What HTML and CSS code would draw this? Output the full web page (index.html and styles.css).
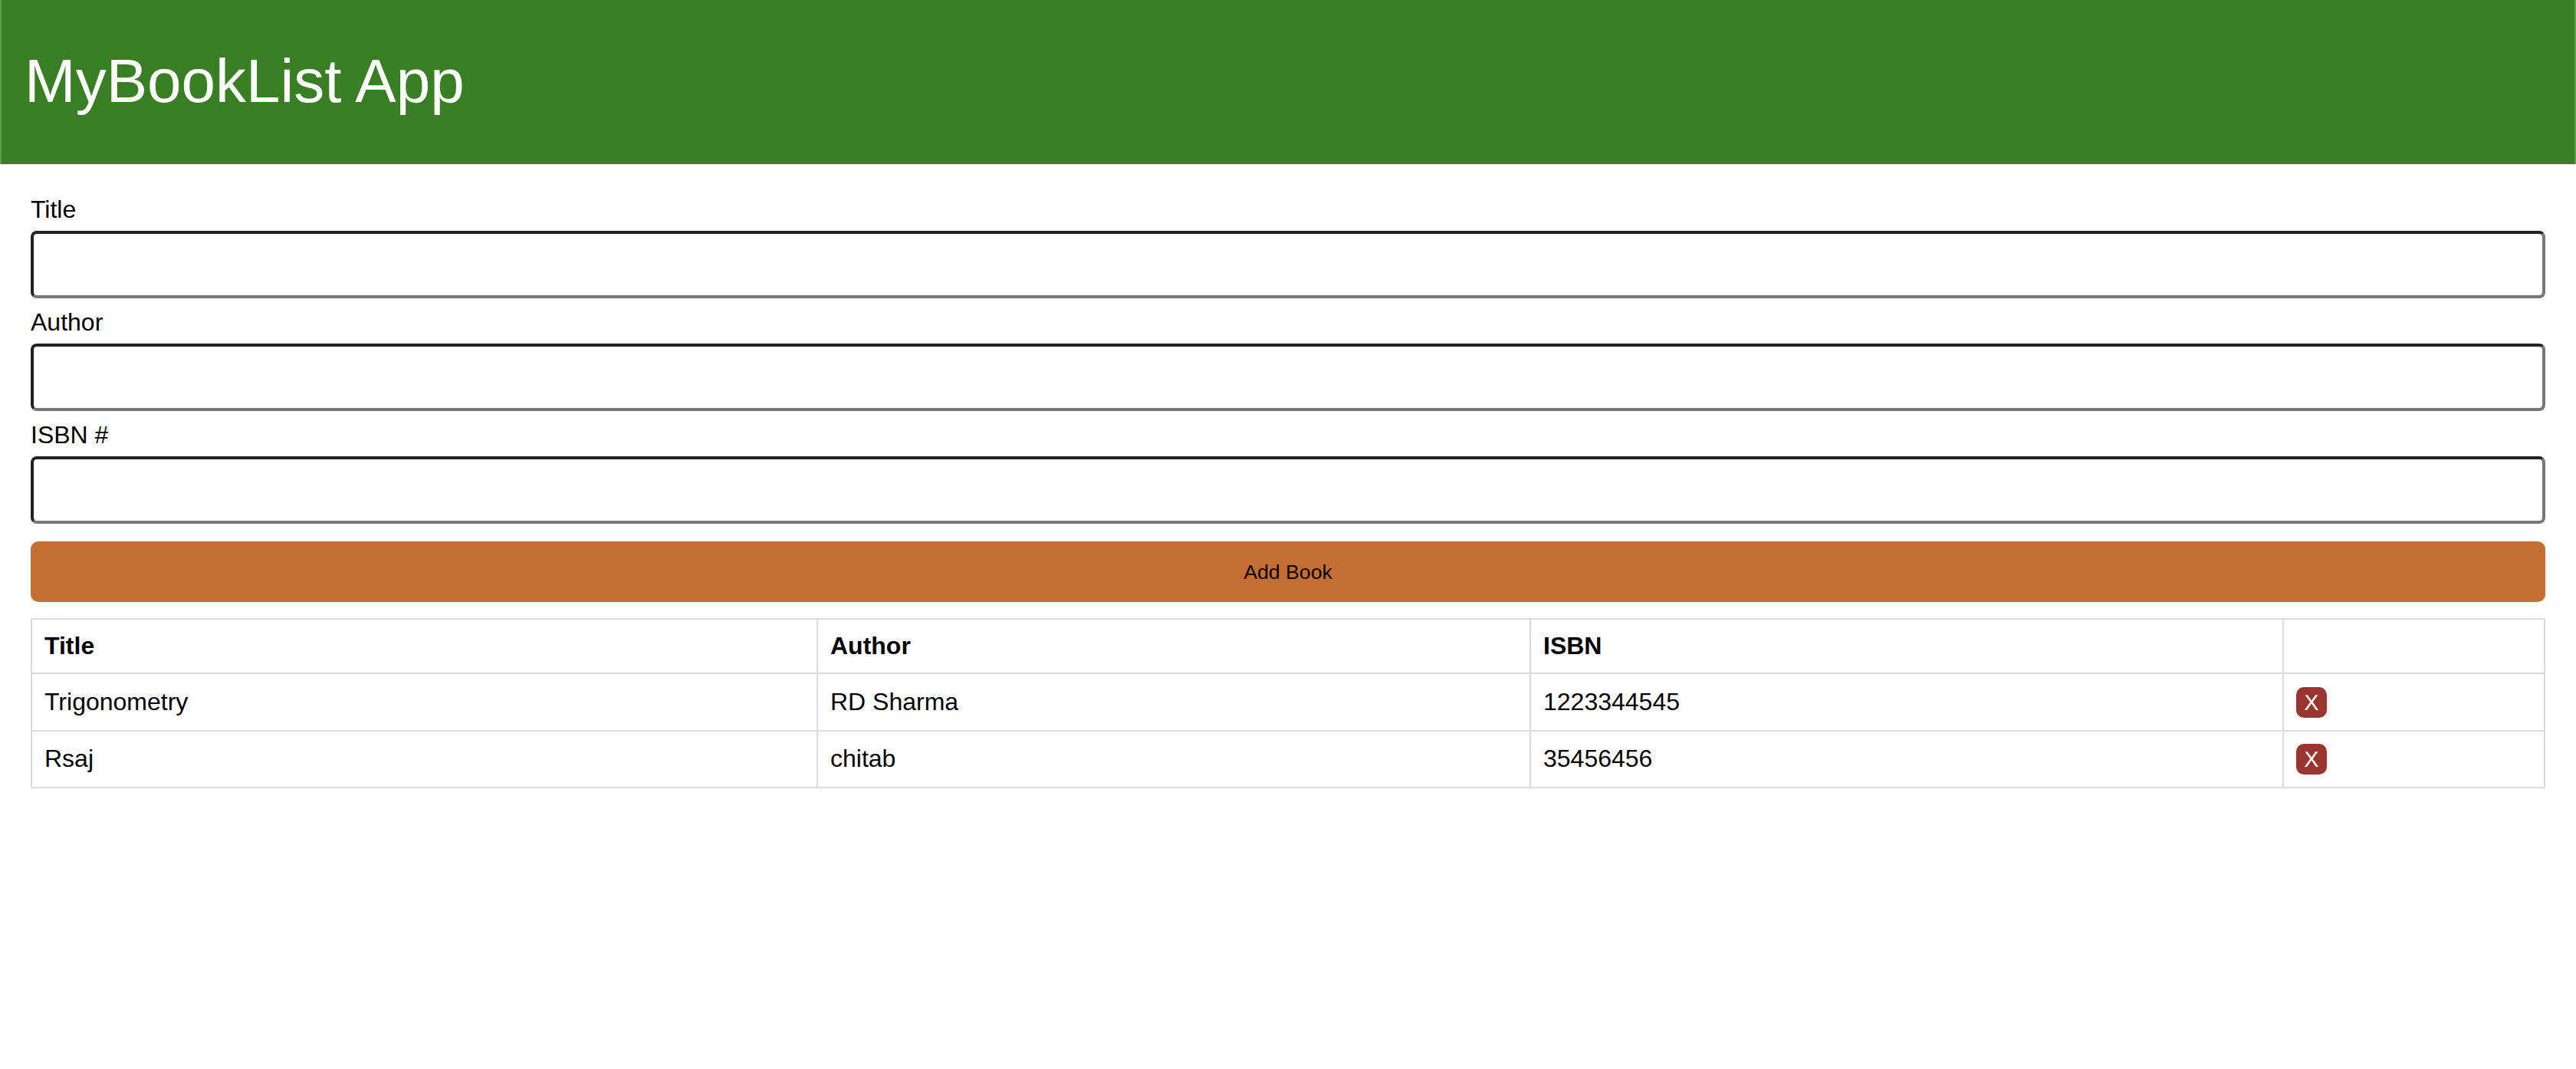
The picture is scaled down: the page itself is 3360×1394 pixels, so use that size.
FILE: index.html
```html
<!DOCTYPE html>
<html lang="en">
<head>
<meta charset="utf-8">
<title>MyBookList App</title>
<link rel="stylesheet" href="styles.css">
</head>
<body>
<header class="app-header">
  <h1 class="app-title">MyBookList App</h1>
</header>
<main class="container">
  <form class="book-form">
    <div class="form-group">
      <label class="form-label" for="title">Title</label>
      <input class="form-input" type="text" id="title">
    </div>
    <div class="form-group">
      <label class="form-label" for="author">Author</label>
      <input class="form-input" type="text" id="author">
    </div>
    <div class="form-group">
      <label class="form-label" for="isbn">ISBN #</label>
      <input class="form-input" type="text" id="isbn">
    </div>
    <button type="button" class="add-btn">Add Book</button>
  </form>
  <table class="book-table">
    <colgroup>
      <col class="col-title">
      <col class="col-author">
      <col class="col-isbn">
      <col class="col-action">
    </colgroup>
    <thead>
      <tr><th>Title</th><th>Author</th><th>ISBN</th><th></th></tr>
    </thead>
    <tbody>
      <tr><td>Trigonometry</td><td>RD Sharma</td><td>1223344545</td><td><button type="button" class="del-btn">X</button></td></tr>
      <tr><td>Rsaj</td><td>chitab</td><td>35456456</td><td><button type="button" class="del-btn">X</button></td></tr>
    </tbody>
  </table>
</main>
</body>
</html>
```
FILE: styles.css
```css
html, body {
  margin: 0;
  padding: 0;
  background: #ffffff;
}
body {
  font-family: "Liberation Sans", Arial, Helvetica, sans-serif;
  color: #000;
}
.app-header {
  box-sizing: border-box;
  height: 214px;
  background: #387e23;
  border-left: 2px solid #5e9a4d;
  border-right: 2px solid #5e9a4d;
  padding: 60px 30px 0;
}
.app-title {
  margin: 0;
  font-size: 80px;
  font-weight: normal;
  line-height: normal;
  color: #ffffff;
}
.container {
  padding: 41px 40px 0;
}
.book-form {
  display: flex;
  flex-direction: column;
}
.form-group {
  display: flex;
  flex-direction: column;
  margin-bottom: 13px;
}
.form-label {
  display: block;
  font-size: 32px;
  line-height: 36px;
}
.form-input {
  box-sizing: border-box;
  margin: 10px 0 0;
  height: 88px;
  width: 100%;
  border-style: solid;
  border-width: 4px;
  border-top-color: #222;
  border-left-color: #222;
  border-bottom-color: #777;
  border-right-color: #777;
  border-radius: 8px;
  background: #fff;
  font-size: 32px;
  font-family: inherit;
  padding: 0 12px;
}
.add-btn {
  margin-top: 10px;
  box-sizing: border-box;
  height: 79px;
  width: 100%;
  border: none;
  border-radius: 10px;
  background: #c46e33;
  color: #000;
  font-family: "Liberation Sans", Arial, sans-serif;
  font-size: 26.67px;
  line-height: 30px;
  padding: 25px 0 24px;
}
.book-table {
  margin-top: 21px;
  width: 100%;
  border-collapse: collapse;
  table-layout: fixed;
  font-size: 32px;
}
.col-title { width: 1025px; }
.col-author { width: 930px; }
.col-isbn { width: 982px; }
.col-action { width: auto; }
.book-table th,
.book-table td {
  border: 2px solid #dcdcdc;
  padding: 16px;
  text-align: left;
  vertical-align: middle;
}
.book-table th {
  font-weight: bold;
}
.del-btn {
  box-sizing: border-box;
  width: 40px;
  height: 40px;
  padding: 0;
  border: none;
  border-radius: 10px;
  background: #9a3430;
  color: #fff;
  font-family: "Liberation Sans", Arial, sans-serif;
  font-size: 29px;
  line-height: 40px;
  text-align: center;
  vertical-align: middle;
}
```
